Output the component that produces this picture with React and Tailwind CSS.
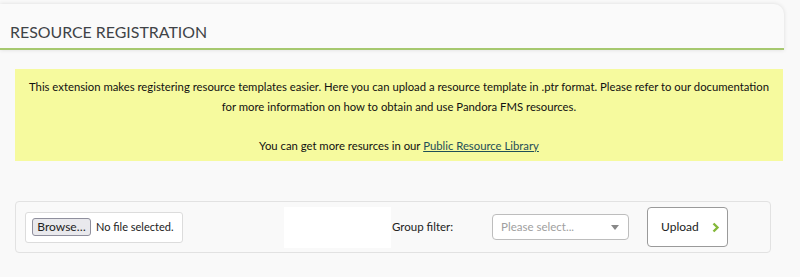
import React from 'react';

const intro =
  'This extension makes registering resource templates easier. Here you can upload a resource template in .ptr format. Please refer to our documentation for more information on how to obtain and use Pandora FMS resources.';

const Header = () => (
  <div className="w-[784px] pt-[4px]">
    <div className="h-[46px] bg-[#fafafa] rounded-tr-[10px] border-b-2 border-[#a6c86f] shadow-[0_0_4px_rgba(0,0,0,0.12)] flex items-center pl-[10px] pt-[12px]">
      <h1 className="text-[15.9px] text-[#3f4347]">RESOURCE REGISTRATION</h1>
    </div>
  </div>
);

const Notice = () => (
  <div className="ml-[15px] mt-[19px] w-[768px] h-[92px] bg-[#f6fa9e] pt-[8px] text-center text-[11.3px] leading-[19.5px] text-[#111]">
    <p className="px-[14px]">{intro}</p>
    <p className="mt-[19.5px]">
      You can get more resurces in our{' '}
      <a href="#" className="underline text-[#1f4f57]">
        Public Resource Library
      </a>
    </p>
  </div>
);

const UploadForm = () => (
  <div className="ml-[15px] mt-[40px] w-[756px] h-[52px] border border-[#e2e2e2] rounded-[4px] bg-[#f9f9f9] flex items-center text-[12px] text-[#222]">
    <div className="ml-[9px] w-[158px] h-[31px] bg-white border border-[#dcdcdc] rounded-[3px] flex items-center pl-[6px]">
      <button className="h-[18px] w-[59px] bg-[#e9e9ed] border border-[#8f8f9d] rounded-[3px] text-[12px] leading-none text-[#222]">
        Browse…
      </button>
      <span className="ml-[5px] text-[11px]">No file selected.</span>
    </div>
    <div className="ml-[101px] w-[107px] h-[41px] bg-white" />
    <span className="ml-[1px] text-[11.5px]">Group filter:</span>
    <div className="ml-[39px] w-[137px] h-[26px] bg-white border border-[#bdbdbd] rounded-[4px] flex items-center pl-[8px] pr-[9px] justify-between">
      <span className="text-[#a0a0a0] text-[11.5px]">Please select...</span>
      <span className="w-0 h-0 border-l-[4px] border-r-[4px] border-t-[5px] border-l-transparent border-r-transparent border-t-[#888]" />
    </div>
    <button className="ml-[18px] w-[81px] h-[40px] bg-white border border-[#9a9a9a] rounded-[4px] flex items-center pl-[13px] text-[12px] text-[#222]">
      Upload
      <svg className="ml-[13px]" width="8" height="11" viewBox="0 0 8 11">
        <path d="M1.5 1.5 L5.5 5.5 L1.5 9.5" fill="none" stroke="#84b83a" strokeWidth="2.4" />
      </svg>
    </button>
  </div>
);

const App = () => (
  <div className="w-[800px] h-[277px] bg-[#f9f9f9] overflow-hidden font-['Lato','Open_Sans',sans-serif]">
    <Header />
    <Notice />
    <UploadForm />
  </div>
);

export default App;
